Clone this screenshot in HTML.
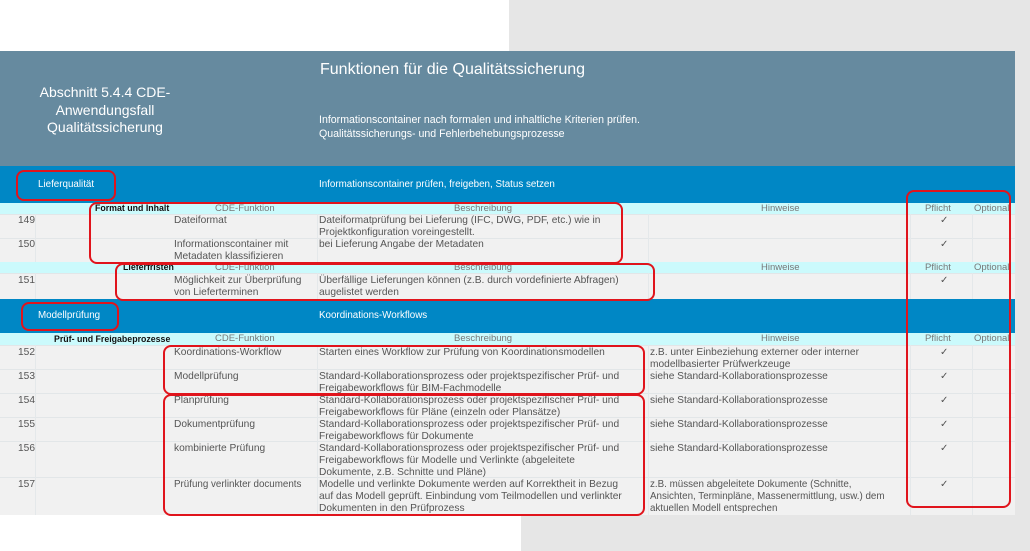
<!DOCTYPE html>
<html><head><meta charset="utf-8"><style>
*{margin:0;padding:0;box-sizing:border-box}
body{width:1030px;height:551px;background:#fff;position:relative;overflow:hidden;font-family:"Liberation Sans",sans-serif;}
.a{position:absolute}
.t{position:absolute;font-size:10.2px;color:#555;line-height:12px;white-space:nowrap}
.h{color:#777;font-size:9.5px}
.b{font-weight:bold;color:#111;font-size:8.8px}
.w{color:#fff}
.row{position:absolute;left:0;width:1015px;background:#f1f1f1;border-top:1px solid #e2e6e8}
.sub{position:absolute;left:0;width:1015px;background:#cbfafc}
.box{position:absolute;border:2.5px solid #e0141c;border-radius:8px}
.vl{position:absolute;width:1px;background:#e4e8ea}
</style></head><body>
<div class="a" style="left:509px;top:0;width:521px;height:51px;background:#e6e6e6"></div>
<div class="a" style="left:1015px;top:51px;width:15px;height:500px;background:#e6e6e6"></div>
<div class="a" style="left:521px;top:515px;width:509px;height:36px;background:#e6e6e6"></div>
<div class="a" style="left:0;top:51px;width:1015px;height:115px;background:#668a9f"></div>
<div class="t w" style="left:20px;top:84px;width:170px;text-align:center;font-size:14px;line-height:17.5px;white-space:normal">Abschnitt 5.4.4 CDE-<br>Anwendungsfall<br>Qualitätssicherung</div>
<div class="t w" style="left:320px;top:60px;font-size:16px;line-height:19px">Funktionen für die Qualitätssicherung</div>
<div class="t w" style="left:319px;top:114px;font-size:10.6px;line-height:13.5px">Informationscontainer nach formalen und inhaltliche Kriterien prüfen.<br>Qualitätssicherungs- und Fehlerbehebungsprozesse</div>
<div class="a" style="left:0;top:166px;width:1015px;height:37px;background:#0087c5"></div>
<div class="t w" style="left:38px;top:179px;font-size:9.8px">Lieferqualität</div>
<div class="t w" style="left:319px;top:179px;font-size:9.8px">Informationscontainer prüfen, freigeben, Status setzen</div>
<div class="a" style="left:0;top:299px;width:1015px;height:34px;background:#0087c5"></div>
<div class="t w" style="left:38px;top:310px;font-size:9.8px">Modellprüfung</div>
<div class="t w" style="left:319px;top:310px;font-size:9.8px">Koordinations-Workflows</div>

<div class="sub" style="top:203px;height:11px"></div>
<div class="row" style="top:214px;height:24px"></div>
<div class="row" style="top:238px;height:24px"></div>
<div class="sub" style="top:262px;height:11px"></div>
<div class="row" style="top:273px;height:26px"></div>
<div class="sub" style="top:333px;height:12px"></div>
<div class="row" style="top:345px;height:24px"></div>
<div class="row" style="top:369px;height:24px"></div>
<div class="row" style="top:393px;height:24px"></div>
<div class="row" style="top:417px;height:24px"></div>
<div class="row" style="top:441px;height:36px"></div>
<div class="row" style="top:477px;height:38px"></div>
<div class="vl" style="left:35px;top:214px;height:48px"></div>
<div class="vl" style="left:317px;top:214px;height:48px"></div>
<div class="vl" style="left:648px;top:214px;height:48px"></div>
<div class="vl" style="left:910px;top:214px;height:48px"></div>
<div class="vl" style="left:972px;top:214px;height:48px"></div>
<div class="vl" style="left:35px;top:273px;height:26px"></div>
<div class="vl" style="left:317px;top:273px;height:26px"></div>
<div class="vl" style="left:648px;top:273px;height:26px"></div>
<div class="vl" style="left:910px;top:273px;height:26px"></div>
<div class="vl" style="left:972px;top:273px;height:26px"></div>
<div class="vl" style="left:35px;top:345px;height:170px"></div>
<div class="vl" style="left:317px;top:345px;height:170px"></div>
<div class="vl" style="left:648px;top:345px;height:170px"></div>
<div class="vl" style="left:910px;top:345px;height:170px"></div>
<div class="vl" style="left:972px;top:345px;height:170px"></div>

<!-- subheaders -->
<div class="t b" style="left:95px;top:203px;line-height:11px">Format und Inhalt</div>
<div class="t h" style="left:215px;top:203px;line-height:11px">CDE-Funktion</div>
<div class="t h" style="left:454px;top:203px;line-height:11px">Beschreibung</div>
<div class="t h" style="left:761px;top:203px;line-height:11px">Hinweise</div>
<div class="t h" style="left:925px;top:203px;line-height:11px">Pflicht</div>
<div class="t h" style="left:974px;top:203px;line-height:11px">Optional</div>

<div class="t b" style="left:123px;top:262px;line-height:11px">Lieferfristen</div>
<div class="t h" style="left:215px;top:262px;line-height:11px">CDE-Funktion</div>
<div class="t h" style="left:454px;top:262px;line-height:11px">Beschreibung</div>
<div class="t h" style="left:761px;top:262px;line-height:11px">Hinweise</div>
<div class="t h" style="left:925px;top:262px;line-height:11px">Pflicht</div>
<div class="t h" style="left:974px;top:262px;line-height:11px">Optional</div>

<div class="t b" style="left:54px;top:333px;line-height:12px">Prüf- und Freigabeprozesse</div>
<div class="t h" style="left:215px;top:333px;line-height:12px">CDE-Funktion</div>
<div class="t h" style="left:454px;top:333px;line-height:12px">Beschreibung</div>
<div class="t h" style="left:761px;top:333px;line-height:12px">Hinweise</div>
<div class="t h" style="left:925px;top:333px;line-height:12px">Pflicht</div>
<div class="t h" style="left:974px;top:333px;line-height:12px">Optional</div>

<!-- rows -->
<div class="t" style="left:18px;top:215px">149</div>
<div class="t" style="left:174px;top:215px">Dateiformat</div>
<div class="t" style="left:319px;top:215px">Dateiformatprüfung bei Lieferung (IFC, DWG, PDF, etc.) wie in<br>Projektkonfiguration voreingestellt.</div>
<div class="t" style="left:18px;top:239px">150</div>
<div class="t" style="left:174px;top:239px">Informationscontainer mit<br>Metadaten klassifizieren</div>
<div class="t" style="left:319px;top:239px">bei Lieferung Angabe der Metadaten</div>
<div class="t" style="left:18px;top:275px">151</div>
<div class="t" style="left:174px;top:275px">Möglichkeit zur Überprüfung<br>von Lieferterminen</div>
<div class="t" style="left:319px;top:275px">Überfällige Lieferungen können (z.B. durch vordefinierte Abfragen)<br>augelistet werden</div>

<div class="t" style="left:18px;top:347px">152</div>
<div class="t" style="left:174px;top:347px">Koordinations-Workflow</div>
<div class="t" style="left:319px;top:347px">Starten eines Workflow zur Prüfung von Koordinationsmodellen</div>
<div class="t" style="left:650px;top:347px">z.B. unter Einbeziehung externer oder interner<br>modellbasierter Prüfwerkzeuge</div>
<div class="t" style="left:18px;top:371px">153</div>
<div class="t" style="left:174px;top:371px">Modellprüfung</div>
<div class="t" style="left:319px;top:371px">Standard-Kollaborationsprozess oder projektspezifischer Prüf- und<br>Freigabeworkflows für BIM-Fachmodelle</div>
<div class="t" style="left:650px;top:371px">siehe Standard-Kollaborationsprozesse</div>
<div class="t" style="left:18px;top:395px">154</div>
<div class="t" style="left:174px;top:395px">Planprüfung</div>
<div class="t" style="left:319px;top:395px">Standard-Kollaborationsprozess oder projektspezifischer Prüf- und<br>Freigabeworkflows für Pläne (einzeln oder Plansätze)</div>
<div class="t" style="left:650px;top:395px">siehe Standard-Kollaborationsprozesse</div>
<div class="t" style="left:18px;top:419px">155</div>
<div class="t" style="left:174px;top:419px">Dokumentprüfung</div>
<div class="t" style="left:319px;top:419px">Standard-Kollaborationsprozess oder projektspezifischer Prüf- und<br>Freigabeworkflows für Dokumente</div>
<div class="t" style="left:650px;top:419px">siehe Standard-Kollaborationsprozesse</div>
<div class="t" style="left:18px;top:443px">156</div>
<div class="t" style="left:174px;top:443px">kombinierte Prüfung</div>
<div class="t" style="left:319px;top:443px">Standard-Kollaborationsprozess oder projektspezifischer Prüf- und<br>Freigabeworkflows für Modelle und Verlinkte (abgeleitete<br>Dokumente, z.B. Schnitte und Pläne)</div>
<div class="t" style="left:650px;top:443px">siehe Standard-Kollaborationsprozesse</div>
<div class="t" style="left:18px;top:479px">157</div>
<div class="t" style="left:174px;top:479px;font-size:9.8px">Prüfung verlinkter documents</div>
<div class="t" style="left:319px;top:479px">Modelle und verlinkte Dokumente werden auf Korrektheit in Bezug<br>auf das Modell geprüft. Einbindung vom Teilmodellen und verlinkter<br>Dokumenten in den Prüfprozess</div>
<div class="t" style="left:650px;top:479px;font-size:9.8px">z.B. müssen abgeleitete Dokumente (Schnitte,<br>Ansichten, Terminpläne, Massenermittlung, usw.) dem<br>aktuellen Modell entsprechen</div>

<div class="t" style="left:940px;top:215px">✓</div>
<div class="t" style="left:940px;top:239px">✓</div>
<div class="t" style="left:940px;top:275px">✓</div>
<div class="t" style="left:940px;top:347px">✓</div>
<div class="t" style="left:940px;top:371px">✓</div>
<div class="t" style="left:940px;top:395px">✓</div>
<div class="t" style="left:940px;top:419px">✓</div>
<div class="t" style="left:940px;top:443px">✓</div>
<div class="t" style="left:940px;top:479px">✓</div>

<!-- red boxes -->
<div class="box" style="left:16px;top:170px;width:100px;height:31px"></div>
<div class="box" style="left:89px;top:202px;width:534px;height:62px"></div>
<div class="box" style="left:115px;top:263px;width:540px;height:38px"></div>
<div class="box" style="left:21px;top:302px;width:98px;height:29px"></div>
<div class="box" style="left:163px;top:345px;width:482px;height:50px"></div>
<div class="box" style="left:163px;top:394px;width:482px;height:122px"></div>
<div class="box" style="left:906px;top:190px;width:105px;height:318px"></div>
</body></html>
